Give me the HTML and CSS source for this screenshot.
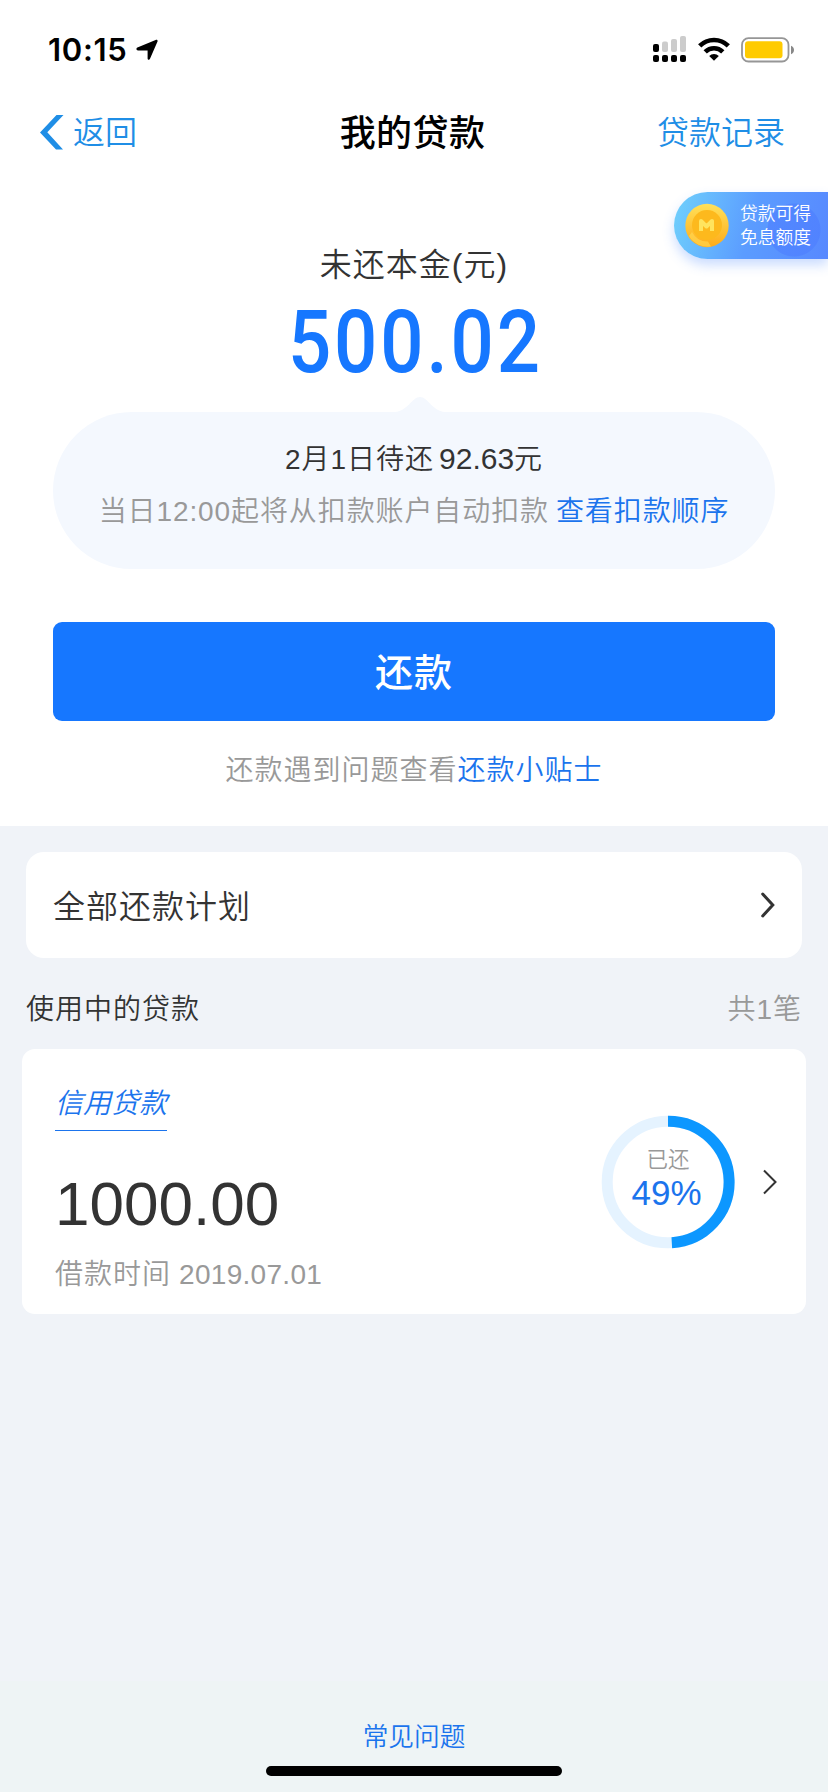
FILE: index.html
```html
<!DOCTYPE html>
<html lang="zh-CN">
<head>
<meta charset="utf-8">
<title>我的贷款</title>
<link rel="stylesheet" href="styles.css">
</head>
<body>
<div class="page">
  <header class="top">
    <div class="status">
      <div class="status-left">
        <span class="clock">10:15</span>
        <svg class="loc" width="23" height="22" viewBox="0 0 23 22"><path d="M1.400 8.600 19.600 1c1.500-.6 2.400.3 1.800 1.800L14 19.800c-.6 1.300-2.400 1.100-2.400-.4V11.400H2C.2 11.300-.1 9.300 1.400 8.600z"/></svg>
      </div>
      <div class="status-right">
        <svg width="34" height="28" viewBox="0 0 34 28">
          <rect x="0" y="9" width="6" height="8" rx="2"/>
          <g fill="#ccc"><rect x="9" y="6.500" width="6" height="10.500" rx="2"/><rect x="18" y="4" width="6" height="13" rx="2"/><rect x="27" y="1" width="6" height="16" rx="2"/></g>
          <rect x="0" y="20" width="6" height="7" rx="2"/><rect x="9" y="20" width="6" height="7" rx="2"/><rect x="18" y="20" width="6" height="7" rx="2"/><rect x="27" y="20" width="6" height="7" rx="2"/>
        </svg>
        <svg class="wifi" width="32" height="24" viewBox="0 0 32 24">
          <g fill="none" stroke="#000" stroke-width="4.600"><path d="M1.700 8.900a20.300 20.300 0 0 1 28.600 0"/><path d="M7.200 14.800a12.500 12.500 0 0 1 17.600 0"/></g>
          <path d="M11.200 18.900a6.800 6.800 0 0 1 9.600 0L16 23.800z"/>
        </svg>
        <svg class="battery" width="54" height="26" viewBox="0 0 54 26">
          <rect x="1" y="1.200" width="46.500" height="23.300" rx="6.500" fill="none" stroke="#969696" stroke-width="1.800"/>
          <rect x="4" y="4.300" width="37.500" height="17" rx="3" fill="#ffcb00"/>
          <path d="M50 8.700c4 1.500 4 7 0 8.500z" fill="#888"/>
        </svg>
      </div>
    </div>
    <nav class="nav">
      <a class="back"><svg width="24" height="35" viewBox="0 0 24 35"><path d="M16.500 0H23.500L7.300 17.300 23 34.500H16L0 17.400z" fill="#1f8ee6"/></svg><span class="nav-text">返回</span></a>
      <h1 class="title nav-text">我的贷款</h1>
      <a class="records nav-text">贷款记录</a>
    </nav>
  </header>

  <main class="summary">
    <div class="promo">
      <svg width="44" height="45" viewBox="0 0 44 45">
        <defs><linearGradient id="coin" x1="0" y1="0" x2="0" y2="1"><stop offset="0" stop-color="#ffe15a"/><stop offset="1" stop-color="#ffab18"/></linearGradient></defs>
        <circle cx="22" cy="22.500" r="21.700" fill="url(#coin)"/>
        <path d="M4 33a21.700 21.700 0 0 0 22 10.500l-3-5A17 17 0 0 1 7 29z" fill="#ffdc58" opacity=".6"/>
        <circle cx="22" cy="22" r="15" fill="#fdb91d"/>
        <path d="M16 28V18l5.500 5.500L27 18v10" fill="none" stroke="#ffe45e" stroke-width="4" stroke-linejoin="round"/>
      </svg>
      <div class="promo-text">贷款可得<br>免息额度</div>
    </div>
    <div class="label">未还本金(元)</div>
    <div class="amount"><span class="amount-num">500.02</span></div>
    <svg class="bump" width="50" height="15" viewBox="0 0 50 15"><path d="M0 15C13 14 17 0 25 0S37 14 50 15z" fill="#f4f8fe"/></svg>
    <section class="bubble">
      <div class="due">2月1日待还<span class="due-num">92.63</span>元</div>
      <div class="auto">当日12:00起将从扣款账户自动扣款<a class="order">查看扣款顺序</a></div>
    </section>
    <button class="repay">还款</button>
    <div class="hint">还款遇到问题查看<a class="link">还款小贴士</a></div>
  </main>

  <section class="loans">
    <a class="plan"><span class="plan-text">全部还款计划</span><svg width="15" height="26" viewBox="0 0 15 26"><path d="M2.700 2 12.800 13 2.700 24" fill="none" stroke="#333" stroke-width="3" stroke-linecap="round"/></svg></a>
    <div class="list-head"><span>使用中的贷款</span><span class="count">共1笔</span></div>
    <article class="loan">
      <div class="loan-info">
        <div class="loan-name">信用贷款</div>
        <div class="loan-sum">1000.00</div>
        <div class="loan-date">借款时间<span class="date-num">2019.07.01</span></div>
      </div>
      <div class="ring">
        <svg class="ring-art" width="134" height="134" viewBox="0 0 134 134">
          <circle cx="67" cy="67" r="60.800" fill="none" stroke="#e5f3ff" stroke-width="11"/>
          <path d="M67 6.200A60.800 60.800 0 0 1 70.800 127.700" fill="none" stroke="#0c97ff" stroke-width="11"/>
        </svg>
        <span class="ring-label">已还</span>
        <span class="ring-num">49%</span>
      </div>
      <svg class="loan-arrow" width="14" height="26" viewBox="0 0 14 26"><path d="M1 1.500 12.500 13 1 24.500" fill="none" stroke="#333" stroke-width="2"/></svg>
    </article>
  </section>

  <footer class="footer">
    <a class="faq">常见问题</a>
    <div class="home"></div>
  </footer>
</div>
</body>
</html>
```
FILE: styles.css
```css
* { box-sizing: border-box; }
body { margin: 0; background: #fff; }
.page {
  width: 828px;
  height: 1792px;
  display: flex;
  flex-direction: column;
  overflow: hidden;
  background: #f0f3f8;
  color: #333;
  font-family: "Liberation Sans", "Noto Sans CJK SC", sans-serif;
  font-weight: 350;
  font-size: 28px;
  white-space: nowrap;
}
.top { background: #fff; }
.status {
  height: 92px;
  padding: 34px 33px 0 48px;
  display: flex;
  justify-content: space-between;
  align-items: flex-start;
}
.status-left, .status-right { display: flex; align-items: flex-start; }
.status-right { padding-top: 1px; }
.clock {
  font: 600 31px/31px Inter, sans-serif;
  color: #000;
  width: 81px;
  letter-spacing: .7px;
}
.loc { margin: 5px 0 0 7px; }
.wifi { margin: 2px 0 0 11px; }
.battery { margin: 2px 0 0 11px; }
.nav {
  height: 80px;
  padding: 0 43px 0 40px;
  display: grid;
  grid-template-columns: 1fr auto 1fr;
  align-items: center;
  color: #1f8ee6;
  font-size: 32px;
}
.nav-text { padding-bottom: 4px; }
.back { display: flex; align-items: center; gap: 9px; }
.title { margin: 0; color: #000; font-size: 36px; font-weight: 500; letter-spacing: .4px; }
.records { text-align: right; }

.summary {
  position: relative;
  height: 654px;
  padding: 69px 53px 0;
  background: #fff;
  display: flex;
  flex-direction: column;
  align-items: center;
}
.promo {
  position: absolute;
  top: 20px;
  right: 0;
  width: 154px;
  height: 67px;
  padding-left: 11px;
  display: flex;
  align-items: center;
  gap: 11px;
  border-radius: 34px 0 0 34px;
  background: radial-gradient(circle at 120px 38px, rgba(76, 124, 255, .55) 0 26px, transparent 27px), linear-gradient(105deg, #70d1fc, #5b9cff 50%, #5788ff);
  box-shadow: 0 6px 12px rgba(80, 140, 255, .3);
  color: #fff;
  font-size: 17.800px;
  line-height: 24px;
}
.label { height: 48px; line-height: 48px; font-size: 32px; letter-spacing: 1px; }
.amount { height: 108px; line-height: 106px; color: #1677ff; }
.amount-num {
  display: inline-block;
  font-family: Roboto, sans-serif;
  font-size: 88px;
  font-weight: 500;
  letter-spacing: 3.4px;
  margin-left: 3px;
  transform: scaleX(.865);
}
.bump { display: block; margin-left: 11px; }
.bubble {
  width: 722px;
  height: 157px;
  padding-top: 22px;
  border-radius: 79px;
  background: #f4f8fe;
  text-align: center;
}
.due { height: 51px; line-height: 50px; letter-spacing: 1px; }
.due-num { font-size: 30px; letter-spacing: 0; margin-left: 5px; }
.auto { height: 52px; line-height: 53px; color: #999; letter-spacing: .9px; }
.link, .order { color: #1b74ed; }
.order { margin-left: 7px; }
.repay {
  width: 722px;
  height: 99px;
  margin: 53px 0 0;
  padding: 3px 0 0;
  border: 0;
  border-radius: 9px;
  background: #1677ff;
  color: #fff;
  font: 500 38px/96px "Liberation Sans", "Noto Sans CJK SC", sans-serif;
  letter-spacing: 1px;
}
.hint { margin-top: 25px; height: 50px; line-height: 50px; color: #999; letter-spacing: 1px; }

.loans { flex: 1; padding: 26px 22px 0; }
.plan {
  margin: 0 4px;
  height: 106px;
  padding: 0 27px;
  display: flex;
  justify-content: space-between;
  align-items: center;
  border-radius: 18px;
  background: #fff;
  font-size: 32px;
  letter-spacing: 1px;
}
.plan-text { padding-bottom: 3px; }
.list-head {
  height: 91px;
  padding: 6px 4px 0;
  display: flex;
  justify-content: space-between;
  align-items: center;
  letter-spacing: 1px;
}
.count { color: #999; }
.loan {
  height: 265px;
  padding: 0 29px 0 33px;
  display: flex;
  align-items: center;
  border-radius: 13px;
  background: #fff;
}
.loan-info { flex: 1; align-self: stretch; padding-top: 28px; }
.loan-name {
  width: 112px;
  height: 54px;
  line-height: 54px;
  border-bottom: 1px solid #1b74ed;
  color: #1b74ed;
  font-style: italic;
}
.loan-sum { margin-top: 38px; height: 70px; line-height: 70px; font-size: 62px; }
.loan-date { margin-top: 12px; height: 48px; line-height: 48px; color: #999; letter-spacing: 1px; }
.date-num { margin-left: 8px; letter-spacing: .3px; }
.ring {
  position: relative;
  width: 134px;
  height: 134px;
  margin-right: 28px;
  display: flex;
  flex-direction: column;
  align-items: center;
}
.ring-art { position: absolute; left: 0; top: 0; }
.ring-label { margin-top: 29px; height: 30px; line-height: 32px; font-size: 21.500px; color: #999; }
.ring-num { height: 38px; line-height: 38px; font-size: 35px; color: #1b74ed; margin-right: 3px; }
.footer {
  height: 111px;
  padding-top: 36px;
  display: flex;
  flex-direction: column;
  align-items: center;
  background: #eef4f5;
}
.faq { height: 40px; line-height: 40px; font-size: 25.700px; color: #1b74ed; }
.home { width: 296px; height: 10px; margin-top: 9px; border-radius: 5px; background: #000; }
```
